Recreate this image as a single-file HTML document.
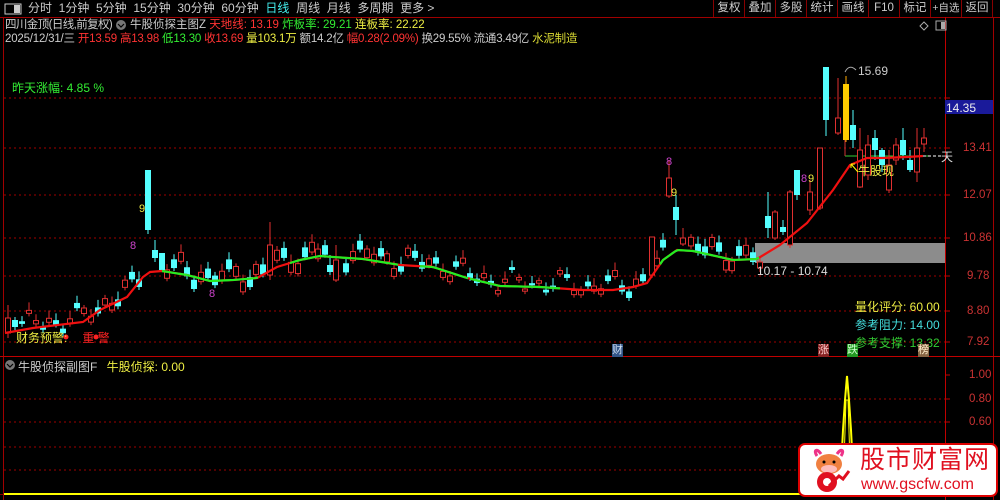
<!DOCTYPE html>
<html><head><meta charset="utf-8"><style>
*{margin:0;padding:0;box-sizing:border-box}
body{width:1000px;height:500px;background:#000;overflow:hidden;position:relative;font-family:"Liberation Sans","Noto Sans CJK SC",sans-serif;font-size:12px;color:#ccc}
.a{position:absolute;white-space:nowrap}
.rb{position:absolute;top:0;height:17px;line-height:17px;border-left:1px solid #800;color:#ccc;font-size:11.5px;text-align:center;overflow:hidden;white-space:nowrap}
</style></head><body>
<svg width="1000" height="500" style="position:absolute;left:0;top:0">
<line x1="0" y1="17.5" x2="1000" y2="17.5" stroke="#a00000"/>
<line x1="3.5" y1="17" x2="3.5" y2="500" stroke="#a00000"/>
<line x1="945.5" y1="17" x2="945.5" y2="500" stroke="#c00000"/>
<line x1="993.5" y1="17" x2="993.5" y2="500" stroke="#a00000"/>
<line x1="0" y1="356.5" x2="1000" y2="356.5" stroke="#c00000"/>
<line x1="0" y1="494.5" x2="946" y2="494.5" stroke="#800"/>
<g stroke="#a00000" stroke-dasharray="2,3">
<line x1="4" y1="98" x2="945" y2="98"/><line x1="4" y1="148" x2="945" y2="148"/><line x1="4" y1="195" x2="945" y2="195"/><line x1="4" y1="238" x2="945" y2="238"/><line x1="4" y1="276" x2="945" y2="276"/><line x1="4" y1="311" x2="945" y2="311"/><line x1="4" y1="342" x2="945" y2="342"/>
<line x1="4" y1="399" x2="945" y2="399"/><line x1="4" y1="422" x2="945" y2="422"/><line x1="4" y1="447" x2="945" y2="447"/><line x1="4" y1="470" x2="945" y2="470"/>
</g>
<g stroke="#c00000"><line x1="945" y1="98" x2="950" y2="98"/><line x1="945" y1="148" x2="950" y2="148"/><line x1="945" y1="195" x2="950" y2="195"/><line x1="945" y1="238" x2="950" y2="238"/><line x1="945" y1="276" x2="950" y2="276"/><line x1="945" y1="311" x2="950" y2="311"/><line x1="945" y1="342" x2="950" y2="342"/><line x1="945" y1="375" x2="950" y2="375"/><line x1="945" y1="399" x2="950" y2="399"/><line x1="945" y1="422" x2="950" y2="422"/></g>
<rect x="755" y="243" width="190" height="20" fill="#8c8c8c"/>
<line x1="845" y1="156" x2="930" y2="156" stroke="#3c3" stroke-width="1"/>
<line x1="845" y1="110" x2="845" y2="156" stroke="#c33"/>
<g id="c"></g>
<polyline id="ma" fill="none" stroke-width="2.2"/>
<g id="mag"></g>
<line x1="923" y1="156" x2="943" y2="156" stroke="#fff" stroke-dasharray="3,2"/>
<polyline fill="none" stroke="#ff0" stroke-width="2" points="4,494 838,494 841,470 843,430 845,400 847,376 849,400 851,430 853,470 856,494 945,494"/>
<polyline fill="none" stroke="#ff0" stroke-width="1" points="843,494 846,400 848,400 851,494"/>
<circle cx="10" cy="365" r="5" fill="#777"/>
<path d="M7,364 L10,367 L13,364" stroke="#000" fill="none" stroke-width="1.2"/>
<circle cx="121" cy="25" r="5" fill="#777"/>
<path d="M118,24 L121,27 L124,24" stroke="#000" fill="none" stroke-width="1.2"/>
<rect x="5" y="4" width="16" height="10" fill="none" stroke="#ccc"/><rect x="14" y="5" width="6" height="8" fill="#ccc"/>
<path d="M924,22 L928,26 L924,30 L920,26Z" fill="none" stroke="#aaa"/>
<rect x="936" y="21" width="10" height="9" fill="none" stroke="#aaa"/><rect x="941" y="22" width="4" height="7" fill="#aaa"/>
<rect x="945" y="100" width="48" height="14" fill="#1a1a9a"/>
<circle cx="66" cy="337" r="2.5" fill="#f22"/><circle cx="96" cy="337" r="2.5" fill="#f22"/>
<path d="M851,164 L858,172" stroke="#ff0"/><path d="M851,164 l4,0 M851,164 l0,4" stroke="#ff0"/>
<path d="M845,72 C848,66 852,66 856,70" stroke="#aaa" fill="none"/>
</svg>

<div class="a" style="left:28px;top:1px;font-size:12px;line-height:15px;color:#ccc">分时&nbsp; 1分钟&nbsp; 5分钟&nbsp; 15分钟&nbsp; 30分钟&nbsp; 60分钟&nbsp; <span style="color:#4ee">日线</span>&nbsp; 周线&nbsp; 月线&nbsp; 多周期&nbsp; 更多 &gt;</div>
<div class="rb" style="left:713px;width:31px">复权</div><div class="rb" style="left:744px;width:31px">叠加</div><div class="rb" style="left:775px;width:31px">多股</div><div class="rb" style="left:806px;width:31px">统计</div><div class="rb" style="left:837px;width:31px">画线</div><div class="rb" style="left:868px;width:31px">F10</div><div class="rb" style="left:899px;width:31px">标记</div><div class="rb" style="left:930px;width:31px;font-size:10.5px">+自选</div><div class="rb" style="left:961px;width:32px;border-right:1px solid #800">返回</div>

<div class="a" style="left:5px;top:18px;line-height:14px;font-size:11.5px"><span style="letter-spacing:-0.6px">四川金顶(日线,前复权)</span><span style="position:absolute;left:125px">牛股侦探主图Z <span style="color:#f33">天地线: 13.19</span> <span style="color:#3e3">炸板率: 29.21</span> <span style="color:#ee4">连板率: 22.22</span></span></div>
<div class="a" style="left:5px;top:32px;line-height:14px;font-size:11.5px;letter-spacing:-0.2px">2025/12/31/三 <span style="color:#f33">开13.59</span> <span style="color:#f33">高13.98</span> <span style="color:#3e3">低13.30</span> <span style="color:#f33">收13.69</span> <span style="color:#ee4">量103.1万</span> 额14.2亿 <span style="color:#f33">幅0.28(2.09%)</span> 换29.55% 流通3.49亿 <span style="color:#dd3">水泥制造</span></div>
<div class="a" style="left:12px;top:79px;color:#3e3;font-size:12px">昨天涨幅: 4.85 %</div>
<div class="a" style="left:16px;top:329px;color:#ee4;font-size:12px">财务预警:<span style="color:#f22;margin-left:15px">重 警</span></div>
<div class="a" style="left:18px;top:358px;color:#ccc;font-size:12px">牛股侦探副图F <span style="color:#ee4;margin-left:6px">牛股侦探: 0.00</span></div>
<div class="a" style="left:855px;top:298px;color:#ee4">量化评分: 60.00</div>
<div class="a" style="left:855px;top:316px;color:#4dd">参考阻力: 14.00</div>
<div class="a" style="left:855px;top:334px;color:#3c3">参考支撑: 13.32</div>
<div class="a" style="left:757px;top:264px;color:#ddd">10.17 - 10.74</div>
<div class="a" style="left:858px;top:64px;color:#ccc">15.69</div>
<div class="a" style="left:858px;top:162px;color:#ee4">牛股现</div>
<div class="a" style="left:941px;top:148px;color:#ddd">天</div>
<div class="a" style="left:139px;top:203px;color:#ee4;font-size:11px">9</div>
<div class="a" style="left:130px;top:240px;color:#c4c;font-size:11px">8</div>
<div class="a" style="left:209px;top:288px;color:#c4c;font-size:11px">8</div>
<div class="a" style="left:666px;top:156px;color:#c4c;font-size:11px">8</div>
<div class="a" style="left:671px;top:187px;color:#ee4;font-size:11px">9</div>
<div class="a" style="left:801px;top:173px;color:#c4c;font-size:11px">8</div>
<div class="a" style="left:808px;top:173px;color:#ee4;font-size:11px">9</div>
<div class="a" style="left:612px;top:344px;background:#358;color:#cde;font-size:11px;line-height:13px">财</div>
<div class="a" style="left:818px;top:344px;background:#822;color:#fcc;font-size:11px;line-height:13px">涨</div>
<div class="a" style="left:847px;top:344px;background:#292;color:#cfc;font-size:11px;line-height:13px">跌</div>
<div class="a" style="left:918px;top:344px;background:#864;color:#fec;font-size:11px;line-height:13px">榜</div>
<div class="a" style="left:946px;top:101px;color:#eee;font-size:12px">14.35</div>
<div class="a" style="left:963px;top:142px;color:#c33;font-size:11.5px">13.41</div>
<div class="a" style="left:963px;top:189px;color:#c33;font-size:11.5px">12.07</div>
<div class="a" style="left:963px;top:232px;color:#c33;font-size:11.5px">10.86</div>
<div class="a" style="left:967px;top:270px;color:#c33;font-size:11.5px">9.78</div>
<div class="a" style="left:967px;top:305px;color:#c33;font-size:11.5px">8.80</div>
<div class="a" style="left:967px;top:336px;color:#c33;font-size:11.5px">7.92</div>
<div class="a" style="left:969px;top:369px;color:#c33;font-size:11.5px">1.00</div>
<div class="a" style="left:969px;top:393px;color:#c33;font-size:11.5px">0.80</div>
<div class="a" style="left:969px;top:416px;color:#c33;font-size:11.5px">0.60</div>

<div class="a" style="left:798px;top:443px;width:200px;height:54px;background:#fff;border:2px solid #d00;border-radius:7px"></div>
<svg class="a" style="left:805px;top:446px" width="50" height="50">
<path d="M12,10 C8,4 12,2 16,8 M36,10 C40,4 36,2 32,8" stroke="#e38" stroke-width="3" fill="none"/>
<ellipse cx="24" cy="18" rx="13" ry="10" fill="#f08040"/>
<ellipse cx="24" cy="23" rx="8" ry="4" fill="#fbb"/>
<circle cx="19" cy="16" r="1.5" fill="#000"/><circle cx="29" cy="16" r="1.5" fill="#000"/>
<circle cx="22" cy="36" r="10" fill="#e01020"/>
<circle cx="22" cy="36" r="4" fill="#fff"/>
<path d="M24,40 L34,30 L38,33 L44,25" stroke="#e01020" stroke-width="3" fill="none"/>
</svg>
<div class="a" style="left:860px;top:446px;color:#e01020;font-size:25px;line-height:28px;letter-spacing:1px">股市财富网</div>
<div class="a" style="left:861px;top:476px;color:#e01020;font-size:16px;line-height:18px">www.gscfw.com</div>

<script>
var M=[[5,333],[33,328],[83,322],[100,310],[127,297],[143,277],[150,272],[162,271],[187,275],[210,281],[233,280],[257,278],[277,267],[300,260],[320,256],[333,257],[363,259],[400,265],[433,267],[467,278],[500,286],[540,287],[583,290],[613,290],[633,287],[647,283],[663,260],[677,250],[693,251],[720,257],[733,260],[757,259],[780,245],[807,223],[833,190],[850,165],[867,158],[883,158],[907,157],[923,156]];
function ma(x){for(var i=1;i<M.length;i++){if(x<=M[i][0]){var a=M[i-1],b=M[i];return a[1]+(b[1]-a[1])*(x-a[0])/(b[0]-a[0]);}}return 156;}
var ns="http://www.w3.org/2000/svg",g=document.getElementById('c');
function el(t,o){var e=document.createElementNS(ns,t);for(var k in o)e.setAttribute(k,o[k]);g.appendChild(e);}
function cd(x,t,b,h,l,up,col){col=col||(up?'#e03030':'#5ff');el('line',{x1:x,y1:h,x2:x,y2:l,stroke:col});
if(up)el('rect',{x:x-2.5,y:t,width:5,height:Math.max(b-t,1),fill:'#000',stroke:col});else el('rect',{x:x-3,y:t,width:6,height:Math.max(b-t,1.5),fill:col});}
var S={148:[170,230,170,234,0],155:[250,258,240,262,0],162:[253,270,253,272,0],652:[237,275,237,278,1],669:[178,196,160,198,1],676:[207,220,195,235,0],683:[238,244,228,246,1],826:[67,120,67,136,0],838:[118,133,78,135,1],853:[125,140,110,148,0],820:[148,208,148,210,1],810:[192,210,180,215,1],797:[170,195,170,200,0],790:[192,245,190,248,1],775:[212,238,210,240,1],768:[216,228,192,238,0],783:[227,232,220,235,0],860:[150,187,128,188,1],868:[145,175,135,180,1],875:[138,150,130,160,0],882:[150,165,148,172,0],889:[165,190,150,193,1],896:[145,160,138,165,1],903:[140,155,128,160,0],910:[160,170,150,172,0],917:[148,172,128,182,1],924:[138,144,128,152,1],760:[262,268,258,272,1],8:[318,333,305,338,1],15:[320,327,317,330,0],270:[245,275,222,280,1],330:[265,272,255,275,0],336:[260,280,245,282,1]};
var X=[];for(var x=8;x<=760;x+=6.9)X.push(Math.round(x));
X.forEach(function(x,i){var k=null;for(var s in S){if(Math.abs(s-x)<4){k=S[s];}}if(k)return;
var m=ma(x),r=Math.sin(i*1.7)*8+Math.cos(i*0.9)*6,up=(Math.sin(i*2.3)>-0.1),hb=2+Math.abs(Math.sin(i*3.1))*8;var c=m+r-4;
cd(x,c-hb/2,c+hb/2,c-hb/2-3-Math.abs(Math.cos(i))*5,c+hb/2+3,up);});
for(var s in S){var k=S[s];cd(+s,k[0],k[1],k[2],k[3],k[4]);}
cd(846,84,140,76,142,0,'#fa0');el('rect',{x:843,y:84,width:6,height:56,fill:'#fc0'});
var p=document.getElementById('ma');
var all='';for(var i=0;i<M.length;i++)all+=M[i][0]+','+M[i][1]+' ';p.setAttribute('points',all);p.setAttribute('stroke','#f01010');
var mg=document.getElementById('mag');
[[162,260],[290,400],[420,470],[470,560],[660,760]].forEach(function(r){var s='';for(var x=r[0];x<=r[1];x+=3)s+=x+','+ma(x)+' ';var e=document.createElementNS(ns,'polyline');e.setAttribute('points',s);e.setAttribute('fill','none');e.setAttribute('stroke','#2e2');e.setAttribute('stroke-width','2.2');mg.appendChild(e);});
</script>
</body></html>
